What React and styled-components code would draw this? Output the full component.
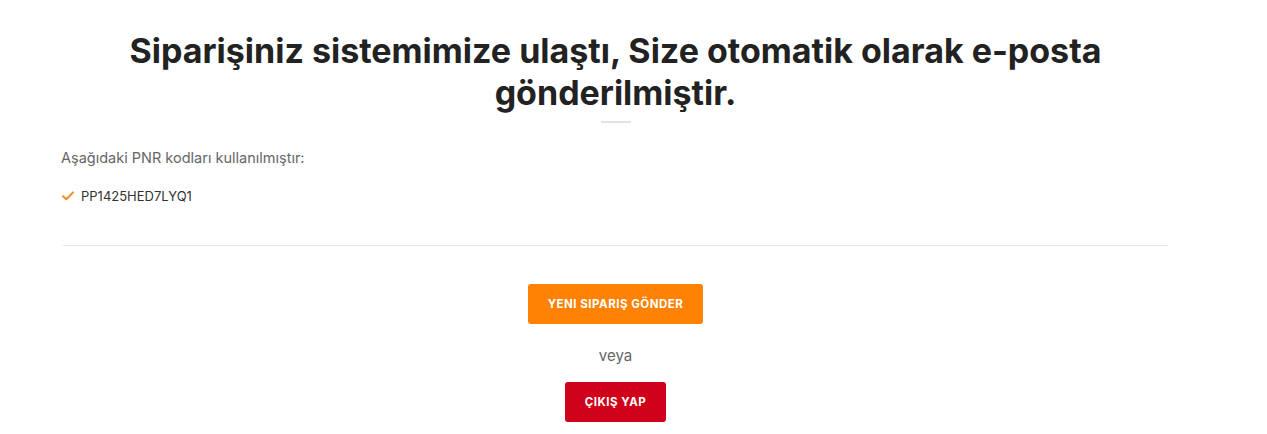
import React from "react";
import styled, { createGlobalStyle } from "styled-components";

const GlobalStyle = createGlobalStyle`
  body {
    margin: 0;
    background: #fff;
    font-family: "Inter", "Open Sans", sans-serif;
  }
`;

function App() {
  return (
    <>
      <GlobalStyle />
      <Page>
        <Title>
          Siparişiniz sistemimize ulaştı, Size otomatik olarak e-posta
          gönderilmiştir.
        </Title>
        <TitleBar />
        <Info>Aşağıdaki PNR kodları kullanılmıştır:</Info>
        <CodeList>
          <CodeItem>
            <Check viewBox="0 0 12 10">
              <path d="M1 5.2 L4.3 8.3 L11 1.4" />
            </Check>
            PP1425HED7LYQ1
          </CodeItem>
        </CodeList>
        <Divider />
        <Actions>
          <Button $bg="#ff8204">Yeni Sipariş Gönder</Button>
          <Or>veya</Or>
          <Button $bg="#d0011b">Çıkış Yap</Button>
        </Actions>
      </Page>
    </>
  );
}

export default App;

const Page = styled.div`
  width: 1109px;
  margin-left: 61px;
  padding-top: 30px;
`;

const Title = styled.h1`
  margin: 0 auto;
  width: 1000px;
  text-align: center;
  font-size: 34px;
  line-height: 42px;
  font-weight: 700;
  color: #222;
  letter-spacing: 0;
`;

const TitleBar = styled.div`
  width: 30px;
  height: 2px;
  background: #e2e2e2;
  margin: 7px auto 0;
`;

const Info = styled.p`
  margin: 24px 0 0;
  font-size: 14.5px;
  line-height: 22px;
  color: #666;
`;

const CodeList = styled.ul`
  list-style: none;
  margin: 16px 0 0;
  padding: 0;
`;

const CodeItem = styled.li`
  display: flex;
  align-items: center;
  gap: 7px;
  font-size: 13px;
  line-height: 22px;
  color: #333;
`;

const Check = styled.svg`
  width: 12px;
  height: 10px;
  margin-left: 1px;
  fill: none;
  stroke: #f08a24;
  stroke-width: 2;
  stroke-linecap: round;
  stroke-linejoin: round;
`;

const Divider = styled.hr`
  border: 0;
  border-top: 1px solid #e6e6e6;
  margin: 38px 0 0 2px;
  width: 1105px;
`;

const Actions = styled.div`
  display: flex;
  flex-direction: column;
  align-items: center;
  padding-top: 38px;
`;

const Button = styled.button`
  height: 40px;
  padding: 0 20px;
  border: 0;
  border-radius: 3px;
  background: ${(p) => p.$bg};
  color: #fff;
  font-family: "Inter", sans-serif;
  font-size: 11.5px;
  font-weight: 700;
  text-transform: uppercase;
  letter-spacing: 0.5px;
  cursor: pointer;
`;

const Or = styled.div`
  margin: 21px 0 15px;
  font-size: 15px;
  line-height: 22px;
  color: #666;
`;
